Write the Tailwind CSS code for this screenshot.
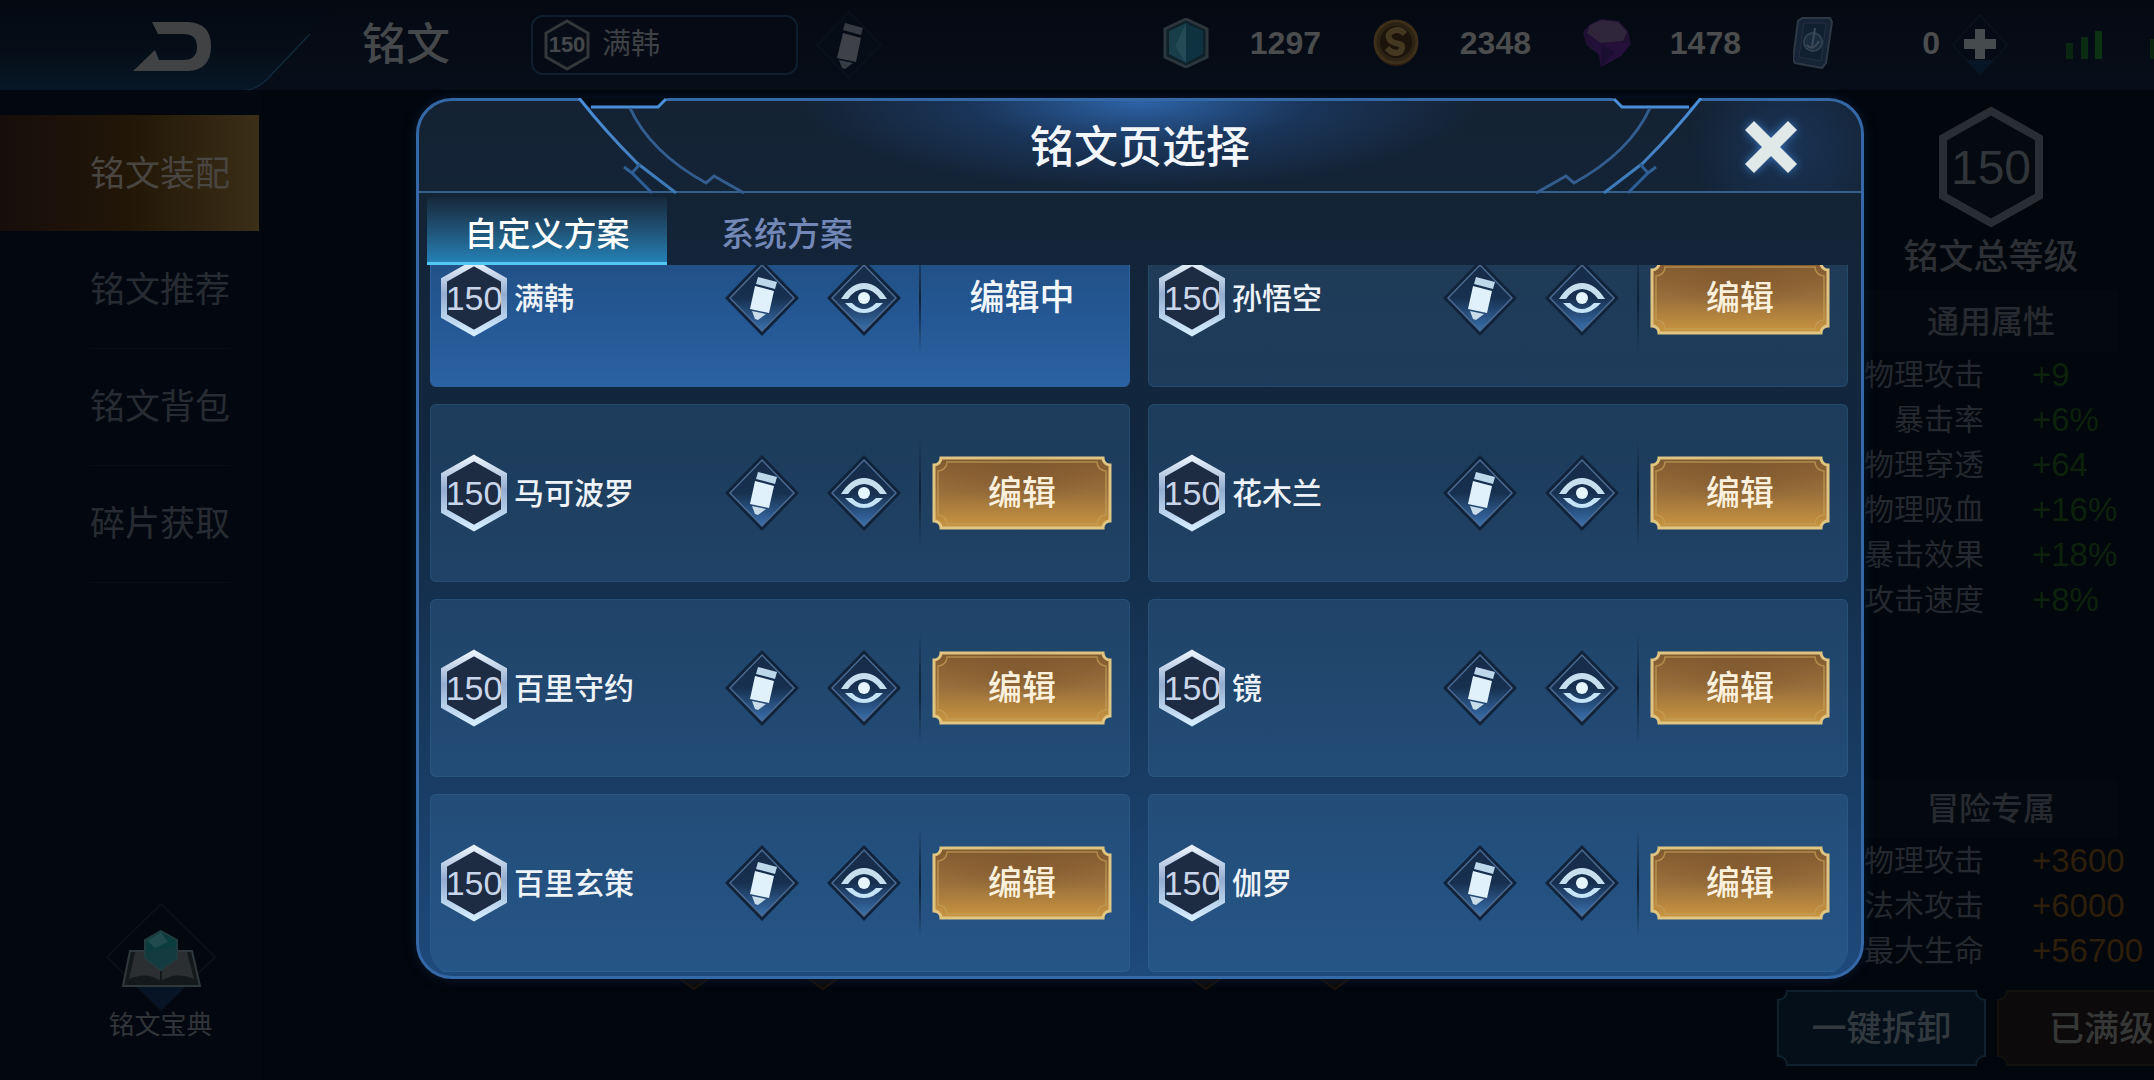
<!DOCTYPE html>
<html lang="zh-CN">
<head>
    <meta charset="UTF-8">
    <meta name="viewport" content="width=device-width, initial-scale=1.0">
    <title>铭文</title>
    <script src="https://cdn.jsdelivr.net/npm/@tailwindcss/browser@4"></script>
</head>
<body class="relative flex flex-col min-h-screen overflow-hidden bg-[#02060d] font-['Liberation_Sans','Noto_Sans_CJK_SC',sans-serif] text-[#45484b]">

    <!-- Icon sprites -->
    <svg class="absolute w-0 h-0" aria-hidden="true">
        <defs>
            <linearGradient id="g-diamond" x1="0" y1="0" x2="0" y2="1">
                <stop offset="0" stop-color="#152c49"/><stop offset=".5" stop-color="#17304f"/><stop offset="1" stop-color="#3a70ae"/>
            </linearGradient>
            <linearGradient id="g-hex" x1="0" y1="0" x2="0" y2="1">
                <stop offset="0" stop-color="#e8f1fb"/><stop offset=".45" stop-color="#93acd0"/><stop offset="1" stop-color="#d3ecff"/>
            </linearGradient>
            <linearGradient id="g-gold" x1="0" y1="0" x2="0" y2="1">
                <stop offset="0" stop-color="#80592f"/><stop offset=".5" stop-color="#9a6f3b"/><stop offset="1" stop-color="#c99640"/>
            </linearGradient>
            <radialGradient id="g-shade">
                <stop offset="0" stop-color="#6b4626" stop-opacity=".3"/><stop offset="1" stop-color="#6b4626" stop-opacity="0"/>
            </radialGradient>
            <linearGradient id="g-back" x1="0" y1="0" x2="0" y2="1">
                <stop offset="0" stop-color="#040912"/><stop offset=".5" stop-color="#050d17"/><stop offset="1" stop-color="#071725"/>
            </linearGradient>
            <linearGradient id="g-arc" gradientUnits="userSpaceOnUse" x1="0" y1="98" x2="0" y2="193">
                <stop offset="0" stop-color="#4a90dc"/><stop offset="1" stop-color="#3c78b4"/>
            </linearGradient>
        </defs>
        <symbol id="i-pencil" viewBox="0 0 76 78">
            <path d="M38 1 75 39 38 77 1 39Z" fill="#10233a"/>
            <path d="M38 6 70 39 38 72 6 39Z" fill="url(#g-diamond)" stroke="#4a6a91" stroke-width="1.5"/>
            <path d="M34 18 53 23 51 30 32 25Z" fill="#bcd6ea"/>
            <path d="M31 27 50 32 45 54 26 50Z" fill="#e0f1fb"/>
            <path d="M28 52 42 55 34 61 31 60Z" fill="#c8dcea"/>
        </symbol>
        <symbol id="i-eye" viewBox="0 0 76 78">
            <path d="M38 1 75 39 38 77 1 39Z" fill="#10233a"/>
            <path d="M38 6 70 39 38 72 6 39Z" fill="url(#g-diamond)" stroke="#4a6a91" stroke-width="1.5"/>
            <path d="M15 40Q25 24 38 24T61 40H54Q47 30 38 30T22 40Z" fill="#c5dfee"/>
            <path d="M19 44H26Q32 50 38 50T50 44H57Q48 54 38 54T19 44Z" fill="#c5e4f8"/>
            <circle cx="38" cy="39" r="6" fill="#e6f6ff"/>
        </symbol>
        <symbol id="i-hex" viewBox="0 0 68 78">
            <path d="M34 4 64 21V57L34 74 4 57V21Z" fill="#1d2c42" stroke="url(#g-hex)" stroke-width="6"/>
        </symbol>
        <symbol id="i-gold" viewBox="0 0 180 74">
            <path d="M9 2H171C171 6 174 9 178 9V65C174 65 171 68 171 72H9C9 68 6 65 2 65V9C6 9 9 6 9 2Z" fill="url(#g-gold)" stroke="#dfc581" stroke-width="3"/>
            <ellipse cx="90" cy="24" rx="80" ry="26" fill="url(#g-shade)"/>
            <path d="M15 6H165C165 11 169 15 174 15V59C169 59 165 63 165 68H15C15 63 11 59 6 59V15C11 15 15 11 15 6Z" fill="none" stroke="#c6a05a" stroke-opacity=".7" stroke-width="1.5"/>
        </symbol>
        <symbol id="i-corner" viewBox="566 98 190 96">
            <path d="M578 97 589 107H659L668 97Z" fill="#050b14"/>
            <g fill="none" stroke="url(#g-arc)" stroke-width="3">
                <path d="M591 107H658L666 99"/>
                <path d="M579 98Q606 132 637 163L676 193"/>
                <path d="M624 167 632 173 652 193M632 173 640 164" stroke="#2f5f96"/>
                <path d="M630 108Q650 152 706 183L714 176 744 193" stroke="#335d8f"/>
            </g>
        </symbol>
    </svg>

    <!-- Top bar -->
    <header class="flex items-center h-[90px] shrink-0 bg-linear-to-b from-[#040912] to-[#080e19] border-b border-[#060d16]">
        <button type="button" aria-label="返回" class="w-[362px] h-[90px] shrink-0">
            <svg class="w-[350px] h-[92px]" viewBox="0 0 350 92">
                <path d="M0 0H342L272 74Q258 91 240 91H0Z" fill="url(#g-back)"/>
                <path d="M310 34 272 74Q258 91 240 91H60" fill="none" stroke="#10283a" stroke-width="1.5"/>
                <path d="M152 22H188Q211 23 211 46 211 70 188 71H133L155 50 159 60H183Q197 60 197 47 197 34 183 34H158Z" fill="#404243"/>
            </svg>
        </button>
        <h1 class="w-[169px] text-[44px] leading-none font-medium">铭文</h1>
        <button type="button" class="flex items-center gap-3 w-[267px] h-[60px] px-[11px] border-2 border-[#0f1e2e] rounded-xl bg-[#050a14]">
            <span class="relative flex items-center justify-center w-[46px] h-[52px] text-[22px] font-bold">
                <svg class="absolute inset-0 w-full h-full" viewBox="0 0 46 52"><path d="M23 2 44 14V38L23 50 2 38V14Z" fill="#070d16" stroke="#34383b" stroke-width="3"/></svg>
                <span class="relative">150</span>
            </span>
            <span class="text-[29px] leading-none text-[#3d4144]">满韩</span>
        </button>
        <button type="button" aria-label="重命名" class="ml-[17px]">
            <svg class="w-[68px] h-[70px] opacity-25" viewBox="0 0 68 70">
                <path d="M34 2 66 35 34 68 2 35Z" fill="#06101c" stroke="#12202f" stroke-width="2"/>
                <path d="M30 13 48 18 46 25 28 20Z" fill="#c6ccce"/>
                <path d="M28 23 46 28 41 52 22 48Z" fill="#e3e3dc"/>
                <path d="M24 50 38 53 30 59 27 58Z" fill="#c6ccce"/>
            </svg>
        </button>

        <div class="flex items-center gap-[52px] ml-auto pb-1 text-[32px] font-bold text-[#4b4c4d]">
            <div class="flex items-center justify-between w-[158px]">
                <svg class="w-[46px] h-[50px] opacity-75" viewBox="0 0 46 50">
                    <path d="M23 1 44 11V39L23 49 2 39V11Z" fill="#12282f" stroke="#39454a" stroke-width="3"/>
                    <path d="M23 5 23 45 6 36V13Z" fill="#1d4f5b"/><path d="M23 5 40 13V36L23 45Z" fill="#123f4e"/>
                    <path d="M23 5 23 45 12 28Z" fill="#2d5f6b"/>
                </svg>
                <span>1297</span>
            </div>
            <div class="flex items-center justify-between w-[158px]">
                <svg class="w-[46px] h-[50px] opacity-75" viewBox="0 0 46 50">
                    <circle cx="23" cy="26" r="22" fill="#37230c"/><circle cx="23" cy="24" r="21" fill="#3a2a14" stroke="#4f3a1b" stroke-width="3"/>
                    <circle cx="23" cy="24" r="16" fill="#241608"/>
                    <path d="M32 16Q27 10 20 13T17 22Q20 25 26 26T27 34Q20 37 14 30" fill="none" stroke="#5b4726" stroke-width="6"/>
                </svg>
                <span>2348</span>
            </div>
            <div class="flex items-center justify-between w-[158px]">
                <svg class="w-[50px] h-[50px] opacity-75" viewBox="0 0 50 50">
                    <path d="M6 7 18 1 36 3 45 13 48 26 38 38 18 49 16 37 3 27 0 14Z" fill="#29123f"/>
                    <path d="M3 16 16 26 38 24 48 26 38 38 18 49 16 37Z" fill="#2f1246"/>
                    <path d="M18 26 32 34 18 49Z" fill="#211039"/>
                    <path d="M7 7 19 2 35 4 44 14 40 23 18 25 4 15Z" fill="#3e304a"/>
                </svg>
                <span>1478</span>
            </div>
            <div class="flex items-center justify-between w-[147px]">
                <svg class="w-[40px] h-[52px] opacity-75" viewBox="0 0 40 52">
                    <path d="M9 1H37L39 5 33 46 29 51 2 46 0 42 5 4Z" fill="#1c2c40" stroke="#3c4855" stroke-width="2"/>
                    <path d="M11 6H33L28 44 6 40Z" fill="#15273b" stroke="#2c3d50"/>
                    <circle cx="20" cy="25" r="9" fill="#22374d" stroke="#405267" stroke-width="2"/>
                    <path d="M22 11 19 30M14 28Q20 35 26 24" fill="none" stroke="#4d5e70" stroke-width="2"/>
                </svg>
                <span>0</span>
            </div>
        </div>
        <button type="button" aria-label="获取更多" class="ml-3">
            <svg class="w-[56px] h-[62px]" viewBox="0 0 56 62">
                <path d="M28 1 55 31 28 61 1 31Z" fill="#050b14" stroke="#0c1824"/>
                <path d="M14 46H42L28 60Z" fill="#071626"/>
                <path d="M23 15H33V25H44V35H33V45H23V35H12V25H23Z" fill="#464b4d"/>
            </svg>
        </button>
        <div class="flex items-end justify-between h-7 w-[88px] ml-[58px]" role="img" aria-label="信号强">
            <span class="w-[7px] h-4 bg-[#0a2610]"></span>
            <span class="w-[7px] h-[22px] bg-[#0b2c11]"></span>
            <span class="w-[7px] h-7 bg-[#0c3213]"></span>
            <span class="w-1 h-5 ml-10 bg-[#0a2410]"></span>
        </div>
    </header>

    <main class="flex justify-between grow">
        <!-- Side menu -->
        <nav class="flex flex-col w-[260px] pt-[25px] border-r border-[#040a12] bg-[#030810] text-[35px] leading-none text-[#272c32]">
            <a href="#" class="flex items-center h-[116px] pl-[90px] bg-linear-to-r from-[#170e0b] via-[#221607] to-[#3b2f18] text-[#494540]">铭文装配</a>
            <a href="#" class="flex items-center h-[117px] pl-[90px]">铭文推荐</a>
            <hr class="w-[140px] -mb-px ml-[90px] border-[#080e15]">
            <a href="#" class="flex items-center h-[117px] pl-[90px]">铭文背包</a>
            <hr class="w-[140px] -mb-px ml-[90px] border-[#080e15]">
            <a href="#" class="flex items-center h-[117px] pl-[90px]">碎片获取</a>
            <hr class="w-[140px] -mb-px ml-[90px] border-[#080e15]">
            <a href="#" class="flex flex-col items-center mt-auto mb-[42px] ml-[62px] text-[26px] text-[#313539]">
                <svg class="w-[112px] h-[110px]" viewBox="0 0 112 110">
                    <path d="M56 2 110 55 56 108 2 55Z" fill="#03070e" stroke="#0c1218" stroke-width="1.5"/>
                    <path d="M30 83H82L56 108Z" fill="#061425"/>
                    <path d="M25 49H87L95 84H18Z" fill="#14191b" stroke="#2f393c" stroke-width="2"/>
                    <path d="M30 50H82L89 77Q70 69 56 79 42 69 24 77Z" fill="#2c2f31"/>
                    <path d="M56 60V79" stroke="#15191c" stroke-width="2"/>
                    <path d="M56 29 72 38V56L56 68 40 56V38Z" fill="#0b3c3e" stroke="#213c40" stroke-width="2"/>
                    <path d="M56 30 63 40 50 46 42 39Z" fill="#204a4d"/><path d="M42 50 71 44V56L56 67 42 56Z" fill="#143c40"/>
                </svg>
                <span>铭文宝典</span>
            </a>
        </nav>

        <!-- Rune board: only the lowest tips show under the dialog -->
        <svg class="absolute top-[972px] left-[670px] w-[690px] h-5" viewBox="0 0 690 20" aria-hidden="true">
            <g fill="#0e0b09" stroke="#1e1309" stroke-width="2"><path d="M0 0 24 17 48 0ZM129 0 153 17 177 0ZM512 0 536 17 560 0ZM641 0 665 17 689 0Z"/></g>
        </svg>

        <!-- Totals -->
        <aside class="flex flex-col w-[326px] pt-4 pl-[36px] text-[30px] leading-[45px] text-[#24292f]">
            <div class="flex flex-col w-[254px] items-center">
                <div class="relative flex items-center justify-center w-[106px] h-[122px] text-[48px] text-[#30353a]">
                    <svg class="absolute inset-0 w-full h-full" viewBox="0 0 106 122"><path d="M53 5 101 32V90L53 117 5 90V32Z" fill="#050910" stroke="#272e34" stroke-width="8"/></svg>
                    <span class="relative">150</span>
                </div>
                <p class="mt-[6px] mb-[11px] text-[35px] font-medium text-[#2c3035]">铭文总等级</p>
                <h2 class="w-full h-[62px] bg-[#040910] text-center text-[32px] leading-[64px] font-medium text-[#272b30]">通用属性</h2>
            </div>
            <dl id="common-stats" class="grid grid-cols-[120px_1fr] gap-x-12"></dl>
            <div class="mt-auto w-[254px]">
                <h2 class="w-full h-[58px] bg-[#040910] text-center text-[32px] leading-[58px] font-medium text-[#272b30]">冒险专属</h2>
            </div>
            <dl id="adventure-stats" class="grid grid-cols-[120px_1fr] gap-x-12"></dl>
            <div class="flex gap-[11px] mt-[17px] mb-[14px] -ml-[87px] text-[35px] font-medium">
                <button type="button" class="relative w-[209px] h-[76px] shrink-0 text-[#32393e]">
                    <svg class="absolute inset-0 w-full h-full" viewBox="0 0 209 76"><path d="M10 1H199C199 6 203 10 208 10V66C203 66 199 70 199 75H10C10 70 6 66 1 66V10C6 10 10 6 10 1Z" fill="#050f1a" stroke="#0e212d" stroke-width="2"/></svg>
                    <span class="relative">一键拆卸</span>
                </button>
                <button type="button" class="relative w-[209px] h-[76px] shrink-0 text-[#363737]">
                    <svg class="absolute inset-0 w-full h-full" viewBox="0 0 209 76"><path d="M10 1H199C199 6 203 10 208 10V66C203 66 199 70 199 75H10C10 70 6 66 1 66V10C6 10 10 6 10 1Z" fill="#0c0a0a" stroke="#13110e" stroke-width="2"/></svg>
                    <span class="relative">已满级</span>
                </button>
            </div>
        </aside>
    </main>

    <!-- Dialog -->
    <div class="absolute inset-0 pt-[98px] pb-[101px] pl-[416px] pr-[290px]">
        <section role="dialog" aria-labelledby="dialog-title" class="relative flex flex-col h-full rounded-[36px] border-3 border-[#3568a6] bg-linear-to-b from-[#142233] via-[#11273f] via-40% to-[#1d4a7c] shadow-[0_0_12px_#081a33]">
            <header class="relative flex items-center justify-center h-[92px] pt-1 shrink-0 rounded-t-[33px] border-b-2 border-[#36608a] bg-[radial-gradient(ellipse_340px_90px_at_50%_0%,#2d64a8,#1f457a88_50%,#13213300),radial-gradient(circle_100px_at_95%_50%,#1d3f6c99,#13213300)]">
                <svg class="absolute -top-[3px] left-[147px] w-[190px] h-[96px]" aria-hidden="true"><use href="#i-corner"/></svg>
                <svg class="absolute -top-[3px] right-[147px] w-[190px] h-[96px] -scale-x-100" aria-hidden="true"><use href="#i-corner"/></svg>
                <h2 id="dialog-title" class="text-[44px] leading-none font-medium text-[#f3f6fb]">铭文页选择</h2>
                <button type="button" aria-label="关闭" class="absolute right-[62px] top-[18px]">
                    <svg class="w-[56px] h-[56px] drop-shadow-[0_0_5px_#3a72b8]" viewBox="0 0 56 56"><path d="M11 2 28 19 45 2 54 11 37 28 54 45 45 54 28 37 11 54 2 45 19 28 2 11Z" fill="#e0e9e8"/></svg>
                </button>
            </header>

            <div class="flex shrink-0 h-[72px] px-2 pt-1" role="tablist">
                <button type="button" role="tab" aria-selected="true" class="w-[240px] pt-[10px] bg-linear-to-b from-[#15283b] to-[#2481b5] border-b-3 border-[#53c8f2] text-[33px] font-medium text-white">自定义方案</button>
                <button type="button" role="tab" aria-selected="false" class="w-[240px] pt-[10px] border-b-3 border-transparent text-[33px] font-medium text-[#7488b8]">系统方案</button>
            </div>

            <div class="grow min-h-0 ml-[11px] mr-[13px] mb-px rounded-b-[26px] overflow-hidden">
                <ul id="page-list" class="grid grid-cols-2 gap-x-[18px] gap-y-[17px] -mt-[56px]"></ul>
            </div>
        </section>
    </div>

    <script>
        const pages = ['满韩', '孙悟空', '马可波罗', '花木兰', '百里守约', '镜', '百里玄策', '伽罗'];

        const commonStats = [
            ['物理攻击', '+9'], ['暴击率', '+6%'], ['物理穿透', '+64'],
            ['物理吸血', '+16%'], ['暴击效果', '+18%'], ['攻击速度', '+8%'],
        ];
        const adventureStats = [['物理攻击', '+3600'], ['法术攻击', '+6000'], ['最大生命', '+56700']];

        // The first page is the one being edited
        document.getElementById('page-list').innerHTML = pages.map((name, i) => `
            <li class="flex items-center h-[178px] pl-[9px] pr-[17px] rounded-md border ${i === 0
                ? 'border-[#2b62a0] bg-linear-to-b from-[#1f4a78] via-[#23558f] to-[#2a62a3]'
                : 'border-[#3c78a0]/25 bg-[#3c72a2]/30'}">
                <span class="relative flex items-center justify-center w-[68px] h-[78px] shrink-0 text-[34px] text-[#c9d5ea]">
                    <svg class="absolute inset-0 w-full h-full"><use href="#i-hex"/></svg>
                    <span class="relative">150</span>
                </span>
                <span class="grow ml-[6px] text-[30px] font-medium whitespace-nowrap text-[#eef3f9]">${name}</span>
                <button type="button" aria-label="重命名 ${name}" class="shrink-0"><svg class="w-[76px] h-[78px]"><use href="#i-pencil"/></svg></button>
                <button type="button" aria-label="查看 ${name}" class="shrink-0 ml-[26px]"><svg class="w-[76px] h-[78px]"><use href="#i-eye"/></svg></button>
                <span class="shrink-0 w-0.5 h-[110px] ml-[17px] mr-[11px] bg-linear-to-b from-transparent via-[#0e2238] to-transparent"></span>
                ${i === 0
                    ? '<span class="shrink-0 w-[180px] text-center text-[35px] font-medium text-[#f1f6fc]">编辑中</span>'
                    : `<button type="button" class="relative shrink-0 w-[180px] h-[74px] text-[34px] font-medium text-[#fbf0dc]">
                        <svg class="absolute inset-0 w-full h-full"><use href="#i-gold"/></svg>
                        <span class="relative">编辑</span>
                    </button>`}
            </li>`).join('');

        function renderStats(id, stats, valueClass) {
            document.getElementById(id).innerHTML = stats.map(([label, value]) => `
                <dt class="flex justify-end whitespace-nowrap">${label}</dt>
                <dd class="${valueClass}">${value}</dd>`).join('');
        }
        renderStats('common-stats', commonStats, 'text-[33px] text-[#0c220c]');
        renderStats('adventure-stats', adventureStats, 'text-[33px] text-[#2d1f0b]');
    </script>
</body>
</html>
